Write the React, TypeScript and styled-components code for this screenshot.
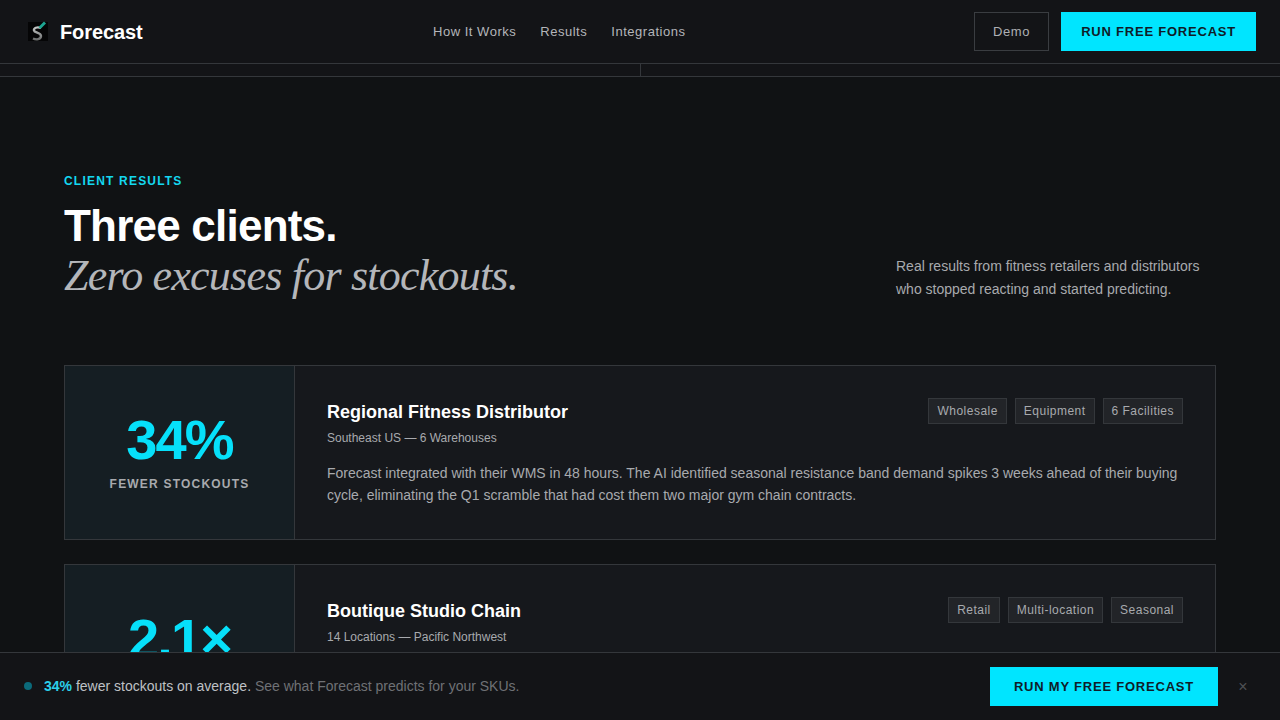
import React from "react";
import styled, { createGlobalStyle } from "styled-components";

const Global = createGlobalStyle`
  html, body { margin: 0; padding: 0; height: 100%; overflow: hidden; background: #101214; }
  body { font-family: "Liberation Sans", Arial, sans-serif; color: #fff; }
  #root { height: 100%; }
  * { box-sizing: border-box; }
`;

const Page = styled.div`
  height: 720px;
  overflow: hidden;
  position: relative;
  background: #101214;
`;

const Nav = styled.header`
  height: 64px;
  background: #131417;
  border-bottom: 1px solid #34373b;
  padding: 0 24px 0 28px;
  display: flex;
  justify-content: space-between;
  align-items: center;
`;

const Brand = styled.div`
  display: flex;
  align-items: center;
  gap: 12px;
  font-size: 20px;
  line-height: 24px;
  font-weight: 700;
  letter-spacing: -0.1px;
  padding-top: 1px;
`;

const NavLinks = styled.nav`
  display: flex;
  gap: 24px;
  margin-left: 2px;
`;

const NavLink = styled.a`
  font-size: 13px;
  letter-spacing: 0.52px;
  color: #b4b6ba;
`;

const NavActions = styled.div`
  display: flex;
  justify-content: flex-end;
  gap: 12px;
`;

const GhostButton = styled.button`
  height: 39px;
  padding: 0 18px;
  background: transparent;
  border: 1px solid #3a3d41;
  color: #aeb0b4;
  font: 400 13px "Liberation Sans", Arial, sans-serif;
  letter-spacing: 0.65px;
`;

const PrimaryButton = styled.button<{ $wide?: boolean }>`
  height: 39px;
  padding: 0 ${(p) => (p.$wide ? "24px" : "20px")};
  background: #00e5ff;
  border: 0;
  color: #0f1c28;
  font: 700 13px "Liberation Sans", Arial, sans-serif;
  letter-spacing: 0.78px;
`;

const Strip = styled.div`
  height: 13px;
  display: grid;
  grid-template-columns: 1fr 1fr;
  background: #131417;
  border-bottom: 1px solid #34373b;
`;

const StripCell = styled.div`
  & + & {
    border-left: 1px solid #34373b;
  }
`;

const Section = styled.main`
  padding: 96px 64px 0;
`;

const Head = styled.div`
  display: flex;
  justify-content: space-between;
  align-items: flex-end;
  margin-bottom: 64px;
`;

const Eyebrow = styled.div`
  font-size: 12px;
  font-weight: 700;
  line-height: 16px;
  letter-spacing: 1.2px;
  color: #14d8f0;
  margin-bottom: 12px;
`;

const Title = styled.h2`
  margin: 0;
  font-size: 44px;
  line-height: 50px;
  font-weight: 700;
  letter-spacing: -0.78px;
  color: #fff;
`;

const TitleItalic = styled.em`
  display: block;
  font-family: "Liberation Serif", "Times New Roman", serif;
  font-weight: 400;
  font-style: italic;
  color: #b4b6ba;
`;

const Lede = styled.p`
  margin: 0;
  width: 320px;
  font-size: 14px;
  line-height: 23px;
  color: #a8aaae;
`;

const Cards = styled.div`
  display: flex;
  flex-direction: column;
  gap: 24px;
`;

const Card = styled.article`
  display: grid;
  grid-template-columns: 230px 1fr;
  height: 175px;
  border: 1px solid #34373b;
  background: #16181c;
  flex: none;
`;

const Metric = styled.div`
  background: #151e23;
  border-right: 1px solid #34373b;
  display: flex;
  flex-direction: column;
  align-items: center;
  justify-content: center;
  padding-bottom: 2px;
`;

const MetricValue = styled.div`
  font-size: 56px;
  line-height: 56px;
  font-weight: 700;
  letter-spacing: -1.9px;
  color: #06e0fa;
`;

const MetricLabel = styled.div`
  margin-top: 8px;
  font-size: 12px;
  line-height: 16px;
  font-weight: 700;
  letter-spacing: 1.2px;
  color: #a8aaae;
`;

const Body = styled.div`
  padding: 32px;
`;

const BodyTop = styled.div`
  display: flex;
  justify-content: space-between;
  align-items: flex-start;
`;

const ClientName = styled.h3`
  margin: 0;
  font-size: 18px;
  line-height: 28px;
  font-weight: 700;
  color: #fff;
`;

const ClientMeta = styled.div`
  margin-top: 4px;
  font-size: 12px;
  line-height: 16px;
  color: #a8aaae;
`;

const Tags = styled.div`
  display: flex;
  gap: 8px;
`;

const Tag = styled.span`
  height: 26px;
  padding: 0 8px;
  display: flex;
  align-items: center;
  font-size: 12px;
  letter-spacing: 0.48px;
  color: #a8aaae;
  background: #222428;
  border: 1px solid #34373b;
`;

const Story = styled.p`
  margin: 16px 0 0;
  font-size: 14px;
  line-height: 22px;
  color: #a8aaae;
`;

const Bar = styled.aside`
  position: fixed;
  left: 0;
  right: 0;
  bottom: 0;
  height: 68px;
  background: #131417;
  border-top: 1px solid #34373b;
  padding: 0 24px;
  display: flex;
  align-items: center;
  justify-content: space-between;
`;

const BarText = styled.div`
  display: flex;
  align-items: center;
  gap: 12px;
  font-size: 14px;
  line-height: 20px;
  color: #bfc1c5;
  padding-bottom: 1px;
`;

const Dot = styled.span`
  width: 8px;
  height: 8px;
  border-radius: 50%;
  background: #0b6a7a;
`;

const Strong = styled.strong`
  color: #2bcfea;
`;

const Muted = styled.span`
  color: #6f7175;
`;

const BarActions = styled.div`
  display: flex;
  align-items: center;
  gap: 12px;
`;

const Close = styled.button`
  width: 26px;
  padding: 0;
  background: none;
  border: 0;
  font: 400 16px "Liberation Sans", Arial, sans-serif;
  color: #4e5054;
`;

const Logo = () => (
  <svg width="20" height="20" viewBox="0 0 20 20" overflow="visible" aria-hidden="true">
    <defs>
      <linearGradient id="logoS" x1="0" y1="0" x2="0" y2="1">
        <stop offset="0" stopColor="#c4c6c6" />
        <stop offset="1" stopColor="#6e7070" />
      </linearGradient>
      <filter id="logoSoft" x="-20%" y="-20%" width="140%" height="140%">
        <feGaussianBlur stdDeviation="0.45" />
      </filter>
    </defs>
    <rect width="20" height="19" fill="#050506" />
    <g filter="url(#logoSoft)">
      <path
        d="M13 6 C9 4.5 5.5 6 6 8.5 C6.5 11 13 10.5 13 14 C13 17.5 8 18 5 16.5"
        fill="none"
        stroke="url(#logoS)"
        strokeWidth="2.4"
      />
      <path d="M11.5 6 L17 0.5" stroke="#1fa592" strokeWidth="2.8" />
    </g>
  </svg>
);

const cards = [
  {
    value: "34%",
    label: "FEWER STOCKOUTS",
    name: "Regional Fitness Distributor",
    meta: "Southeast US — 6 Warehouses",
    tags: ["Wholesale", "Equipment", "6 Facilities"],
    story:
      "Forecast integrated with their WMS in 48 hours. The AI identified seasonal resistance band demand spikes 3 weeks ahead of their buying cycle, eliminating the Q1 scramble that had cost them two major gym chain contracts.",
  },
  {
    value: "2.1×",
    label: "INVENTORY TURNS",
    name: "Boutique Studio Chain",
    meta: "14 Locations — Pacific Northwest",
    tags: ["Retail", "Multi-location", "Seasonal"],
    story: "",
  },
];

export default function App() {
  return (
    <Page>
      <Global />
      <Nav>
        <Brand>
          <Logo />
          Forecast
        </Brand>
        <NavLinks>
          <NavLink>How It Works</NavLink>
          <NavLink>Results</NavLink>
          <NavLink>Integrations</NavLink>
        </NavLinks>
        <NavActions>
          <GhostButton>Demo</GhostButton>
          <PrimaryButton>RUN FREE FORECAST</PrimaryButton>
        </NavActions>
      </Nav>
      <Strip>
        <StripCell />
        <StripCell />
      </Strip>
      <Section>
        <Head>
          <div>
            <Eyebrow>CLIENT RESULTS</Eyebrow>
            <Title>
              Three clients.
              <TitleItalic>Zero excuses for stockouts.</TitleItalic>
            </Title>
          </div>
          <Lede>
            Real results from fitness retailers and distributors who stopped reacting and started predicting.
          </Lede>
        </Head>
        <Cards>
          {cards.map((c) => (
            <Card key={c.name}>
              <Metric>
                <MetricValue>{c.value}</MetricValue>
                <MetricLabel>{c.label}</MetricLabel>
              </Metric>
              <Body>
                <BodyTop>
                  <div>
                    <ClientName>{c.name}</ClientName>
                    <ClientMeta>{c.meta}</ClientMeta>
                  </div>
                  <Tags>
                    {c.tags.map((t) => (
                      <Tag key={t}>{t}</Tag>
                    ))}
                  </Tags>
                </BodyTop>
                <Story>{c.story}</Story>
              </Body>
            </Card>
          ))}
        </Cards>
      </Section>
      <Bar>
        <BarText>
          <Dot />
          <span>
            <Strong>34%</Strong> fewer stockouts on average. <Muted>See what Forecast predicts for your SKUs.</Muted>
          </span>
        </BarText>
        <BarActions>
          <PrimaryButton $wide>RUN MY FREE FORECAST</PrimaryButton>
          <Close>×</Close>
        </BarActions>
      </Bar>
    </Page>
  );
}
